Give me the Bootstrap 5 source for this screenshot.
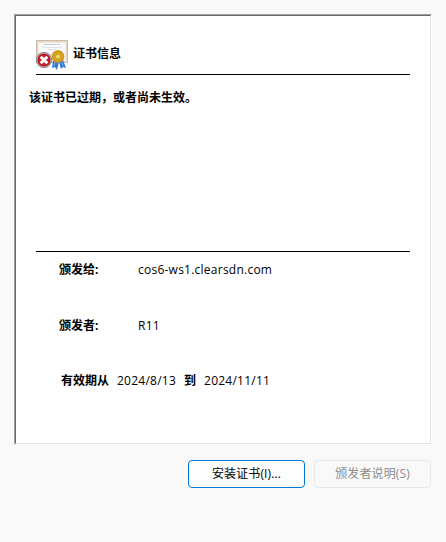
<!DOCTYPE html>
<html lang="zh-CN">
<head>
<meta charset="utf-8">
<meta name="viewport" content="width=device-width, initial-scale=1">
<title>证书信息</title>
<link href="https://cdn.jsdelivr.net/npm/bootstrap@5.3.0/dist/css/bootstrap.min.css" rel="stylesheet">
<style>
body{background:#f9f9f9;color:#000;font:12px/16px "Open Sans","Noto Sans CJK SC",sans-serif;padding:14px 14px 0;height:542px;overflow:hidden}
.cert-frame{width:418px;height:431px;border:1px solid;border-color:#a0a0a0 #fff #fff #a0a0a0}
.cert-panel{height:100%;background:#fff;border:1px solid;border-color:#696969 #e3e3e3 #e3e3e3 #696969}
.cert-heading{margin:0 20px;height:59px;padding-top:22px;border-bottom:1px solid #000;gap:5px}
.cert-icon{width:32px;height:32px}
.cert-heading h1{font-size:12px;line-height:16px;margin:8px 0 0}
.cert-status{height:176px;margin:0 20px 0 13px;padding-top:15px}
.cert-rule{margin:0 20px;height:1px;background:#000}
.cert-row{height:16px;margin-left:43px}
.cert-row dt{width:79px}
.cert-row dd,.cert-row span{letter-spacing:.24px}
.row-first{margin-top:10px}
.row-second{margin-top:40px}
.row-dates{margin:39px 0 0 45px}
.cert-btn{--bs-btn-font-size:12px;--bs-btn-line-height:16px;--bs-btn-padding-y:5px;--bs-btn-padding-x:0;--bs-btn-border-radius:4px;width:117px;height:28px;letter-spacing:.12px}
.btn-install{--bs-btn-color:#000;--bs-btn-bg:#fdfdfd;--bs-btn-border-color:#0078d4}
.btn-issuer{--bs-btn-disabled-color:#8c8c8c;--bs-btn-disabled-bg:#f9f9f9;--bs-btn-disabled-border-color:#e8e8e8;--bs-btn-disabled-opacity:1}
.cert-actions{width:417px;gap:9px;margin-top:15px}
</style>
</head>
<body>
<main>
<section class="cert-frame"><div class="cert-panel">
<header class="cert-heading d-flex align-items-start">
<svg class="cert-icon" viewBox="0 0 32 32" aria-hidden="true">
<defs>
<radialGradient id="red"><stop offset="0" stop-color="#e33b42"/><stop offset="1" stop-color="#b0141e"/></radialGradient>
<radialGradient id="gold"><stop offset="0" stop-color="#fff0a0"/><stop offset=".5" stop-color="#e8b52a"/><stop offset="1" stop-color="#c88b10"/></radialGradient>
</defs>
<rect x=".5" y="2.5" width="31" height="22" fill="#eee6d8" stroke="#c8bba8"/>
<rect x="1.5" y="3.5" width="29" height="20" fill="none" stroke="#ded2bf" stroke-dasharray="1 1"/>
<rect x="3" y="5" width="26" height="17" fill="#fbfbfd"/>
<path d="M8 6.5h16" stroke="#b4bddb" stroke-dasharray="2 .5"/>
<path d="M6 9.5h20M12 11.5h8" stroke="#dde1ec"/>
<path d="M17 23l-1 7 3-1 2 3 2-8zM23 24l2 7 2-2 3 1-3-8z" fill="#2f78d2"/>
<path d="M19 24l-1 4M26 24l1 4" stroke="#78b4f0"/>
<circle cx="22" cy="18.6" r="6" fill="url(#gold)" stroke="#c99626" stroke-width=".8"/>
<circle cx="22" cy="18.6" r="2.8" fill="#efcc50" stroke="#b78212" stroke-width=".8"/>
<path d="M21 19.5l2-2" stroke="#fff3b8"/>
<circle cx="8" cy="22" r="8" fill="#77777b"/><circle cx="8" cy="22" r="7.3" fill="#ccc"/>
<circle cx="8" cy="22" r="6.6" fill="url(#red)"/>
<path d="M4.7 18.7l6.6 6.6M11.3 18.7l-6.6 6.6" stroke="#fff" stroke-width="2.9"/>
</svg>
<h1 class="fw-bold">证书信息</h1>
</header>
<div class="cert-status fw-bold">该证书已过期，或者尚未生效。</div>
<div class="cert-rule"></div>
<dl class="m-0">
<div class="cert-row row-first d-flex"><dt>颁发给:</dt><dd class="m-0">cos6-ws1.clearsdn.com</dd></div>
<div class="cert-row row-second d-flex"><dt>颁发者:</dt><dd class="m-0">R11</dd></div>
</dl>
<div class="cert-row row-dates d-flex gap-2"><b>有效期从</b><span>2024/8/13</span><b>到</b><span>2024/11/11</span></div>
</div></section>
<footer class="cert-actions d-flex justify-content-end">
<button type="button" class="btn cert-btn btn-install">安装证书(I)...</button>
<button type="button" class="btn cert-btn btn-issuer" disabled>颁发者说明(S)</button>
</footer>
</main>
<script src="https://cdn.jsdelivr.net/npm/bootstrap@5.3.0/dist/js/bootstrap.bundle.min.js"></script>
</body>
</html>
